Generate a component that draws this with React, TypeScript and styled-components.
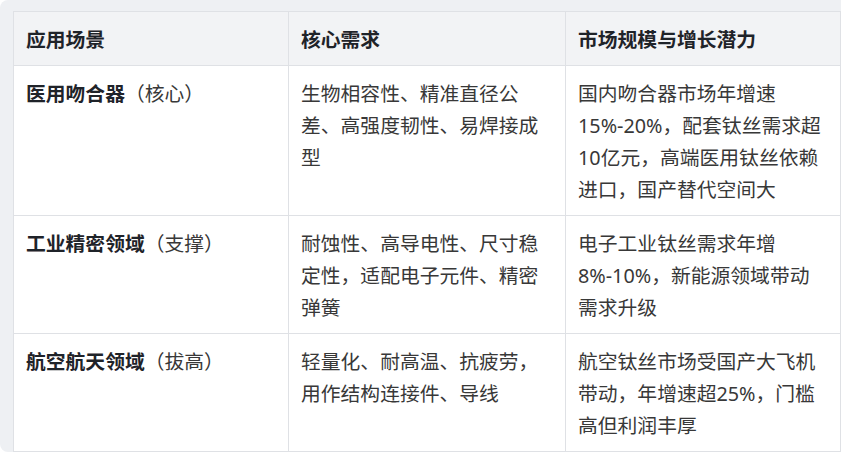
import React from 'react';
import styled, { createGlobalStyle } from 'styled-components';

const GlobalStyle = createGlobalStyle`
  html, body {
    margin: 0;
    padding: 0;
    background: #ffffff;
  }
  body {
    font-family: "Noto Sans", "Noto Sans CJK SC", sans-serif;
  }
`;

const Panel = styled.div`
  width: 828px;
  height: 441px;
  padding: 11px 0 0 13px;
  background: #eef0f3;
  border-radius: 8px 0 0 8px;
`;

const Table = styled.table`
  width: 827px;
  table-layout: fixed;
  border-collapse: collapse;
  background: #ffffff;
  font-size: 19.8px;
  line-height: 32px;
  color: #383838;
`;

const HeadCell = styled.th`
  background: #f2f3f5;
  border: 1px solid #dfe1e5;
  padding: 12px 12px 9px;
  text-align: left;
  font-weight: 700;
  color: #1f2329;
`;

const Cell = styled.td`
  border: 1px solid #dfe1e5;
  padding: 12px 12px 9px;
  vertical-align: top;
`;

const Strong = styled.strong`
  font-weight: 700;
  color: #1f2329;
`;

type Row = { name: string; tag: string; needs: string; market: string };

const rows: Row[] = [
  {
    name: '医用吻合器',
    tag: '（核心）',
    needs: '生物相容性、精准直径公差、高强度韧性、易焊接成型',
    market: '国内吻合器市场年增速15%-20%，配套钛丝需求超10亿元，高端医用钛丝依赖进口，国产替代空间大',
  },
  {
    name: '工业精密领域',
    tag: '（支撑）',
    needs: '耐蚀性、高导电性、尺寸稳定性，适配电子元件、精密弹簧',
    market: '电子工业钛丝需求年增8%-10%，新能源领域带动需求升级',
  },
  {
    name: '航空航天领域',
    tag: '（拔高）',
    needs: '轻量化、耐高温、抗疲劳，用作结构连接件、导线',
    market: '航空钛丝市场受国产大飞机带动，年增速超25%，门槛高但利润丰厚',
  },
];

export default function App() {
  return (
    <>
      <GlobalStyle />
      <Panel>
        <Table>
          <colgroup>
            <col style={{ width: 275 }} />
            <col style={{ width: 277 }} />
            <col style={{ width: 275 }} />
          </colgroup>
          <thead>
            <tr>
              <HeadCell>应用场景</HeadCell>
              <HeadCell>核心需求</HeadCell>
              <HeadCell>市场规模与增长潜力</HeadCell>
            </tr>
          </thead>
          <tbody>
            {rows.map((r) => (
              <tr key={r.name}>
                <Cell>
                  <Strong>{r.name}</Strong>
                  {r.tag}
                </Cell>
                <Cell>{r.needs}</Cell>
                <Cell>{r.market}</Cell>
              </tr>
            ))}
          </tbody>
        </Table>
      </Panel>
    </>
  );
}
